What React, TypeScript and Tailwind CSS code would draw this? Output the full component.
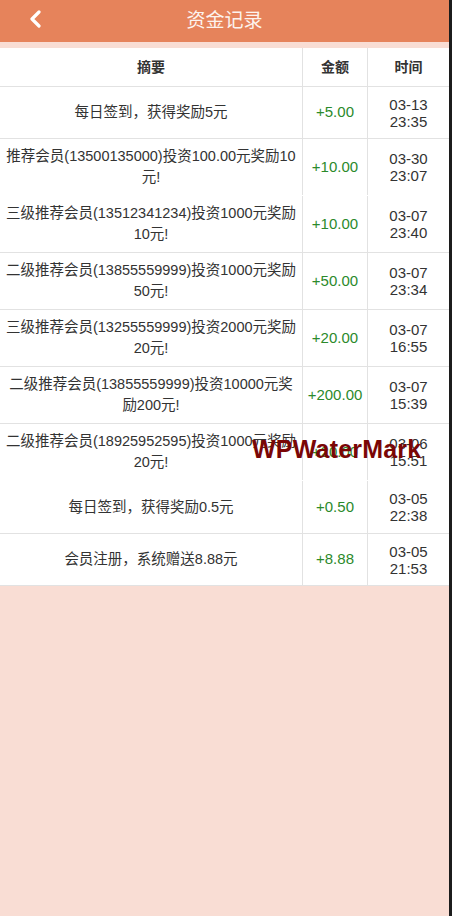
import React from "react";

type Row = { lines: string[]; amt: string; d: string; t: string; border: boolean; h: string };

const rows: Row[] = [
  { lines: ["每日签到，获得奖励5元"], amt: "+5.00", d: "03-13", t: "23:35", border: true, h: "h-[52px]" },
  { lines: ["推荐会员(13500135000)投资100.00元奖励10", "元!"], amt: "+10.00", d: "03-30", t: "23:07", border: false, h: "h-[57px]" },
  { lines: ["三级推荐会员(13512341234)投资1000元奖励", "10元!"], amt: "+10.00", d: "03-07", t: "23:40", border: true, h: "h-[57px]" },
  { lines: ["二级推荐会员(13855559999)投资1000元奖励", "50元!"], amt: "+50.00", d: "03-07", t: "23:34", border: true, h: "h-[57px]" },
  { lines: ["三级推荐会员(13255559999)投资2000元奖励", "20元!"], amt: "+20.00", d: "03-07", t: "16:55", border: true, h: "h-[57px]" },
  { lines: ["二级推荐会员(13855559999)投资10000元奖", "励200元!"], amt: "+200.00", d: "03-07", t: "15:39", border: true, h: "h-[57px]" },
  { lines: ["二级推荐会员(18925952595)投资1000元奖励", "20元!"], amt: "+20.00", d: "03-06", t: "15:51", border: false, h: "h-[57px]" },
  { lines: ["每日签到，获得奖励0.5元"], amt: "+0.50", d: "03-05", t: "22:38", border: true, h: "h-[53px]" },
  { lines: ["会员注册，系统赠送8.88元"], amt: "+8.88", d: "03-05", t: "21:53", border: true, h: "h-[52px]" },
];

export default function App() {
  return (
    <div
      className="flex h-[916px] w-[452px] overflow-hidden bg-[#f9ddd4]"
      style={{ fontFamily: '"Liberation Sans", "Noto Sans CJK SC", sans-serif' }}
    >
      <div className="relative flex-1">
        <div className="relative flex h-[42px] items-center justify-center bg-[#e6835b]">
          <svg className="absolute left-[28px] top-[10px]" width="14" height="18" viewBox="0 0 14 18">
            <path d="M11 2 L4 9 L11 16" fill="none" stroke="#fff" strokeWidth="3.2" strokeLinecap="round" strokeLinejoin="round" />
          </svg>
          <span className="text-[19px] text-[#fdf3ee]">资金记录</span>
        </div>
        <div className="mt-[6px] bg-white text-[14px] text-[#333]">
          <div className="flex h-[39px] border-b border-[#e2e2e2]">
            <div className="flex w-[303px] items-center justify-center border-r border-[#e2e2e2] font-bold">摘要</div>
            <div className="flex w-[65px] items-center justify-center border-r border-[#e2e2e2] font-bold">金额</div>
            <div className="flex flex-1 items-center justify-center font-bold">时间</div>
          </div>
          {rows.map((r, i) => (
            <div
              key={i}
              className={"flex " + r.h + " " + (r.border ? "border-b border-[#e2e2e2]" : "border-b border-white")}
            >
              <div className="flex w-[303px] flex-col items-center justify-center border-r border-[#e2e2e2] text-center text-[14.5px] leading-[21px] whitespace-nowrap">
                {r.lines.map((l, j) => (
                  <span key={j}>{l}</span>
                ))}
              </div>
              <div className="flex w-[65px] items-center justify-center border-r border-[#e2e2e2] text-[15px] text-[#2b8a2b]">
                {r.amt}
              </div>
              <div className="flex flex-1 flex-col items-center justify-center text-[15px] leading-[17px] text-[#333]">
                <span>{r.d}</span>
                <span>{r.t}</span>
              </div>
            </div>
          ))}
        </div>
        <div className="absolute left-[252px] top-[437px] text-[25px] font-bold leading-none tracking-[0.2px] text-[#7a0606]">
          WPWaterMark
        </div>
      </div>
      <div className="w-[3px] bg-[#1c1c1c]" />
    </div>
  );
}
